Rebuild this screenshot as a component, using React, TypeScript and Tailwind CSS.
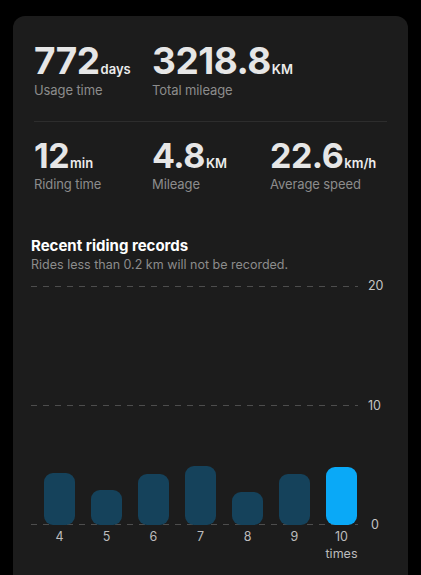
const font = { fontFamily: "Inter, 'Liberation Sans', sans-serif" };

function Stat({ value, unit, label, big }: { value: string; unit: string; label: string; big?: boolean }) {
  return (
    <div className="w-[118px] shrink-0">
      <div className="flex items-baseline">
        <span
          className={
            big
              ? "text-[37px] leading-none font-bold tracking-[-0.5px] text-[#e6e6e6]"
              : "text-[34px] leading-none font-bold tracking-[-0.5px] text-[#e6e6e6]"
          }
        >
          {value}
        </span>
        <span className="ml-[1px] text-[13px] leading-none font-semibold text-[#ececec]">{unit}</span>
      </div>
      <div className="mt-[2px] text-[13px] leading-[18px] tracking-[-0.1px] text-[#8c8c8c]">{label}</div>
    </div>
  );
}

const bars = [
  { day: "4", h: 52 },
  { day: "5", h: 35 },
  { day: "6", h: 51 },
  { day: "7", h: 59 },
  { day: "8", h: 33 },
  { day: "9", h: 51 },
  { day: "10", h: 58 },
];

const dashed = "h-px bg-[repeating-linear-gradient(90deg,#4d4d4d_0_6px,transparent_6px_12px)]";

export default function App() {
  return (
    <main className="min-h-screen bg-black pt-[16px] px-[13px]" style={font}>
      <div className="rounded-[12px] bg-[#1c1c1c] pt-[26px] pb-[40px]">
        {/* top stats */}
        <div className="mx-[21px] border-b border-[#2d2d2d] pb-[22px]">
          <div className="flex">
            <Stat value="772" unit="days" label="Usage time" big />
            <Stat value="3218.8" unit="KM" label="Total mileage" big />
          </div>
        </div>
        <div className="mx-[21px] mt-[17px] flex">
          <Stat value="12" unit="min" label="Riding time" />
          <Stat value="4.8" unit="KM" label="Mileage" />
          <Stat value="22.6" unit="km/h" label="Average speed" />
        </div>

        {/* recent records */}
        <div className="mx-[18px] mt-[43px]">
          <h2 className="text-[15px] leading-5 font-bold text-white">Recent riding records</h2>
          <p className="text-[12.5px] leading-[18px] text-[#8c8c8c]">Rides less than 0.2 km will not be recorded.</p>

          <div className="mt-[12px] grid grid-cols-[327px_auto] gap-x-[10px]">
            <div className="grid">
              <div className="col-start-1 row-start-1 flex h-[239px] flex-col justify-between">
                <div className={dashed} />
                <div className={dashed} />
                <div className={dashed} />
              </div>
              <div className="col-start-1 row-start-1 flex items-end gap-[16px] self-end pl-[13px]">
                {bars.map((b, i) => (
                  <div
                    key={b.day}
                    className={i === 6 ? "w-[31px] rounded-[9px] bg-[#0aa9f7]" : "w-[31px] rounded-[9px] bg-[#15425b]"}
                    style={{ height: b.h }}
                  />
                ))}
              </div>
            </div>
            <div className="-my-[7px] flex flex-col justify-between text-[12.5px] leading-[14px] text-[#c4c4c4]">
              <span>20</span>
              <span>10</span>
              <span className="pl-[3px]">0</span>
            </div>

            <div className="mt-[3px] flex gap-[16px] pl-[13px] text-[12.5px] leading-[17px] text-[#bdbdbd]">
              {bars.map((b) => (
                <div key={b.day} className="flex w-[31px] flex-col items-center">
                  <span>{b.day}</span>
                  {b.day === "10" && <span>times</span>}
                </div>
              ))}
            </div>
          </div>
        </div>
      </div>
    </main>
  );
}
